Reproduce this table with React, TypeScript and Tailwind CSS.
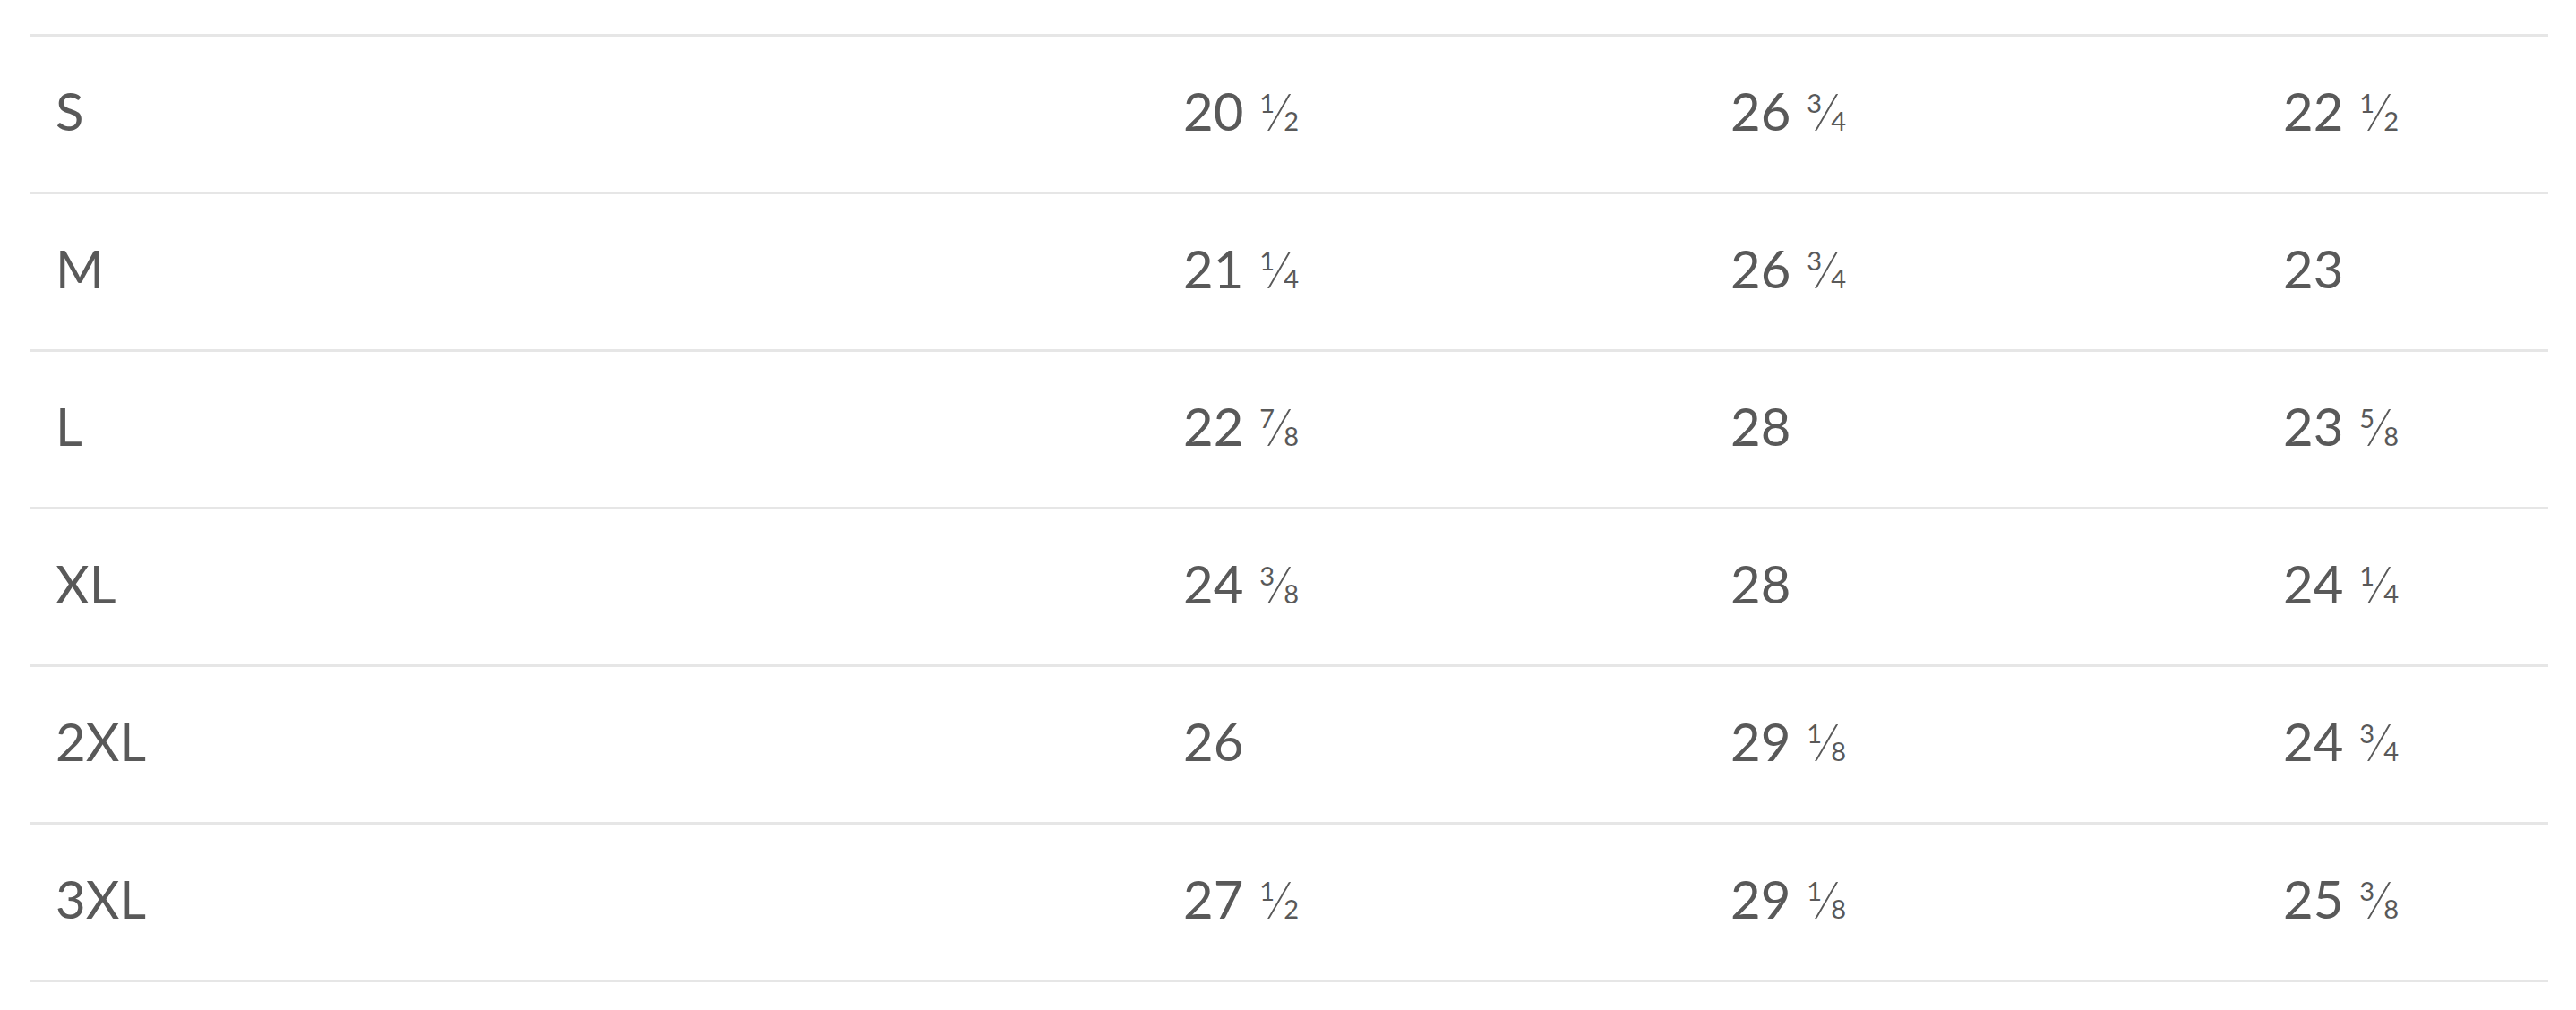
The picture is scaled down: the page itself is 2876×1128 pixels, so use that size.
const rows = [
  ["S", "20 1/2", "26 3/4", "22 1/2"],
  ["M", "21 1/4", "26 3/4", "23"],
  ["L", "22 7/8", "28", "23 5/8"],
  ["XL", "24 3/8", "28", "24 1/4"],
  ["2XL", "26", "29 1/8", "24 3/4"],
  ["3XL", "27 1/2", "29 1/8", "25 3/8"],
];

function Value({ text }: { text: string }) {
  const [whole, frac] = text.split(" ");
  if (!frac) return <>{whole}</>;
  const [num, den] = frac.split("/");
  return (
    <>
      {whole}
      <span className="ml-[18px] whitespace-nowrap">
        <span className="text-[29px] align-[20px]">{num}</span>
        <span className="mx-[1px] inline-block font-light">⁄</span>
        <span className="text-[29px]">{den}</span>
      </span>
    </>
  );
}

export default function App() {
  return (
    <div className="min-h-screen bg-white pt-[38px] pl-[33px]">
      <table
        className="w-[2812px] table-fixed border-collapse text-[58px] text-[#595959]"
        style={{ fontFamily: "Lato, 'Open Sans', sans-serif" }}
      >
        <colgroup>
          <col className="w-[1259px]" />
          <col className="w-[611px]" />
          <col className="w-[617px]" />
          <col />
        </colgroup>
        <tbody className="border-t-[3px] border-[#e6e6e6]">
          {rows.map((r) => (
            <tr key={r[0]} className="h-[176px] border-b-[3px] border-[#e6e6e6]">
              {r.map((c, i) => (
                <td key={i} className="px-[29px] pb-[8px] align-middle leading-none">
                  <Value text={c} />
                </td>
              ))}
            </tr>
          ))}
        </tbody>
      </table>
    </div>
  );
}
